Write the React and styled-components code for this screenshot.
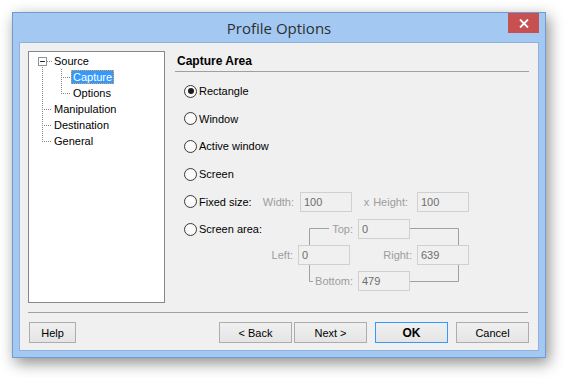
import React from 'react';
import styled, { createGlobalStyle } from 'styled-components';

const Global = createGlobalStyle`
  html, body { margin: 0; padding: 0; background: #ffffff; }
  body { font-family: "Liberation Sans", Arial, sans-serif; }
  * { box-sizing: border-box; }
`;

const Page = styled.div`
  width: 566px;
  height: 378px;
  padding: 12px 0 0 12px;
  overflow: hidden;
`;

const Window = styled.div`
  width: 534px;
  height: 346px;
  border: 1px solid #6f9bd0;
  background: #a3c9f3;
  padding: 0 6px 6px 6px;
  display: flex;
  flex-direction: column;
  box-shadow: 3px 5px 14px rgba(0, 0, 0, 0.45);
`;

const TitleBar = styled.div`
  height: 29px;
  display: grid;
  grid-template-columns: 1fr auto 1fr;
  align-items: center;
`;

const Title = styled.div`
  grid-column: 2;
  font-family: "Open Sans", "Noto Sans", sans-serif;
  font-size: 15px;
  color: #2e2e2e;
  padding-top: 1px;
`;

const CloseButton = styled.div`
  grid-column: 3;
  justify-self: end;
  align-self: start;
  width: 31px;
  height: 20px;
  background: #c75050;
  display: flex;
  align-items: center;
  justify-content: center;
`;

const Client = styled.div`
  flex: 1;
  background: #f0f0f0;
  border: 1px solid #8fb1db;
  padding: 8px 9px 7px 8px;
  display: flex;
  flex-direction: column;
`;

const Main = styled.div`
  height: 252px;
  display: flex;
  gap: 10px;
`;

const Tree = styled.div`
  width: 137px;
  height: 252px;
  border: 1px solid #828790;
  background: #ffffff;
  padding: 1px 0 0 4px;
  font-size: 11px;
  color: #000;
`;

const TreeRow = styled.div`
  height: 16px;
  display: flex;
  align-items: center;
`;

const TreeLabel = styled.span`
  height: 14px;
  line-height: 12px;
  padding: 0 1px;
  border: 1px dotted ${(p) => (p.$selected ? '#e8a040' : 'transparent')};
  background: ${(p) => (p.$selected ? '#3399ff' : 'transparent')};
  color: ${(p) => (p.$selected ? '#ffffff' : '#000000')};
  white-space: nowrap;
`;

const Panel = styled.div`
  flex: 1;
  display: flex;
  flex-direction: column;
`;

const PanelHeader = styled.div`
  height: 21px;
  line-height: 20px;
  padding-left: 2px;
  font-size: 12px;
  font-weight: bold;
  color: #000;
  border-bottom: 1px solid #a0a0a0;
`;

const Options = styled.div`
  padding: 9px 0 0 9px;
  display: flex;
  flex-direction: column;
  gap: 7.7px;
  font-size: 11px;
`;

const RadioRow = styled.label`
  height: 20px;
  display: flex;
  align-items: center;
  gap: 2px;
  color: #000;
  white-space: nowrap;
`;

const RadioCircle = styled.span`
  width: 13px;
  height: 13px;
  border-radius: 50%;
  border: 1px solid #3a3a3a;
  background: radial-gradient(circle at 50% 40%, #ffffff 0%, #f2f2f2 100%);
  display: flex;
  align-items: center;
  justify-content: center;
  flex: none;
  &::after {
    content: '';
    width: 6px;
    height: 6px;
    border-radius: 50%;
    background: ${(p) => (p.$checked ? '#1c1c1c' : 'transparent')};
  }
`;

const FixedRow = styled.div`
  display: grid;
  grid-template-columns: 116px 52px 65px 52px;
  height: 20px;
  align-items: center;
`;

const FieldGrid = styled.div`
  display: grid;
  grid-template-columns: 114px 52px 8px 52px 7px 52px;
  grid-template-rows: 20px 20px 20px;
  row-gap: 6px;
  align-items: center;
`;

const MutedLabel = styled.span`
  grid-column: ${(p) => p.$col || 'auto'};
  grid-row: ${(p) => p.$row || 'auto'};
  justify-self: end;
  padding-right: ${(p) => p.$pad ?? 5}px;
  color: #9d9d9d;
  white-space: nowrap;
  display: flex;
  gap: ${(p) => p.$gap || 0}px;
`;

const Field = styled.div`
  grid-column: ${(p) => p.$col || 'auto'};
  grid-row: ${(p) => p.$row || 'auto'};
  width: 52px;
  height: 20px;
  border: 1px solid #d0d0d0;
  background: #f0f0f0;
  color: #6d6d6d;
  padding-left: 3px;
  line-height: 18px;
  font-size: 11px;
`;

const GridCell = styled.div`
  grid-column: ${(p) => p.$col};
  grid-row: ${(p) => p.$row};
`;

const SplitCell = styled(GridCell)`
  display: flex;
  justify-content: space-between;
  align-items: center;
`;

const Bracket = styled.svg`
  grid-column: 2 / 7;
  grid-row: 1 / 4;
  width: 171px;
  height: 72px;
  align-self: start;
`;

const Separator = styled.div`
  height: 1px;
  margin: 9px 1px 0 0;
  background: #a0a0a0;
`;

const Footer = styled.div`
  margin-top: 9px;
  padding-left: 1px;
  display: flex;
  align-items: center;
`;

const Spacer = styled.div`
  flex: 1;
`;

const Button = styled.button`
  width: ${(p) => p.$w || 73}px;
  height: 21px;
  margin-left: ${(p) => p.$ml || 0}px;
  border: 1px solid ${(p) => (p.$default ? '#3399ff' : '#adadad')};
  background: linear-gradient(#f0f0f0, #e5e5e5);
  font-family: "Liberation Sans", Arial, sans-serif;
  font-size: ${(p) => (p.$default ? 12 : 11)}px;
  font-weight: ${(p) => (p.$default ? 'bold' : 'normal')};
  color: #000;
  padding: 0;
  border-radius: 0;
  cursor: default;
`;

const DOT = { stroke: '#8a8a8a', strokeWidth: 1, strokeDasharray: '1 1', fill: 'none' };

function Gutter({ kind }) {
  return (
    <svg width="19" height="16" viewBox="0 0 19 16" style={{ flex: 'none' }}>
      {kind === 'root' && (
        <>
          <rect x="5.5" y="4.5" width="8" height="8" fill="#ffffff" stroke="#919191" />
          <line x1="7" y1="8.5" x2="12" y2="8.5" stroke="#1a2f5a" strokeWidth="1" />
          <line x1="14" y1="8.5" x2="19" y2="8.5" {...DOT} />
          <line x1="9.5" y1="14" x2="9.5" y2="16" {...DOT} />
        </>
      )}
      {kind === 'line' && <line x1="9.5" y1="0" x2="9.5" y2="16" {...DOT} />}
      {kind === 'tee' && (
        <>
          <line x1="9.5" y1="0" x2="9.5" y2="16" {...DOT} />
          <line x1="11" y1="8.5" x2="19" y2="8.5" {...DOT} />
        </>
      )}
      {kind === 'ell' && (
        <>
          <line x1="9.5" y1="0" x2="9.5" y2="9" {...DOT} />
          <line x1="11" y1="8.5" x2="19" y2="8.5" {...DOT} />
        </>
      )}
    </svg>
  );
}

const treeItems = [
  { label: 'Source', gutters: ['root'] },
  { label: 'Capture', gutters: ['line', 'tee'], selected: true },
  { label: 'Options', gutters: ['line', 'ell'] },
  { label: 'Manipulation', gutters: ['tee'] },
  { label: 'Destination', gutters: ['tee'] },
  { label: 'General', gutters: ['ell'] },
];

function Radio({ checked, children }) {
  return (
    <RadioRow>
      <RadioCircle $checked={checked} />
      <span>{children}</span>
    </RadioRow>
  );
}

export default function App() {
  return (
    <>
      <Global />
      <Page>
        <Window>
          <TitleBar>
            <Title>Profile Options</Title>
            <CloseButton>
              <svg width="10" height="9" viewBox="0 0 10 9">
                <path d="M1 0.5 L9 8.5 M9 0.5 L1 8.5" stroke="#ffffff" strokeWidth="1.8" />
              </svg>
            </CloseButton>
          </TitleBar>
          <Client>
            <Main>
              <Tree>
                {treeItems.map((it) => (
                  <TreeRow key={it.label}>
                    {it.gutters.map((g, i) => (
                      <Gutter key={i} kind={g} />
                    ))}
                    <TreeLabel $selected={it.selected}>{it.label}</TreeLabel>
                  </TreeRow>
                ))}
              </Tree>
              <Panel>
                <PanelHeader>Capture Area</PanelHeader>
                <Options>
                  <Radio checked>Rectangle</Radio>
                  <Radio>Window</Radio>
                  <Radio>Active window</Radio>
                  <Radio>Screen</Radio>
                  <FixedRow>
                    <SplitCell $col="1" $row="1">
                      <Radio>Fixed size:</Radio>
                      <MutedLabel $pad={6}>Width:</MutedLabel>
                    </SplitCell>
                    <Field $col="2" $row="1">100</Field>
                    <MutedLabel $col="3" $row="1" $pad={9} $gap={4}>
                      <span>x</span>
                      <span>Height:</span>
                    </MutedLabel>
                    <Field $col="4" $row="1">100</Field>
                  </FixedRow>
                  <FieldGrid>
                    <Bracket viewBox="0 0 171 72">
                      <g stroke="#a0a0a0" strokeWidth="1" fill="none">
                        <path d="M31 9.5 H11.5 V26" />
                        <path d="M11.5 46 V62.5 H15" />
                        <path d="M112 9.5 H160.5 V26" />
                        <path d="M160.5 46 V62.5 H112" />
                      </g>
                    </Bracket>
                    <GridCell $col="1" $row="1">
                      <Radio>Screen area:</Radio>
                    </GridCell>
                    <MutedLabel $col="2 / 4" $row="1">Top:</MutedLabel>
                    <Field $col="4" $row="1">0</Field>
                    <MutedLabel $col="1" $row="2">Left:</MutedLabel>
                    <Field $col="2" $row="2">0</Field>
                    <MutedLabel $col="3 / 6" $row="2">Right:</MutedLabel>
                    <Field $col="6" $row="2">639</Field>
                    <MutedLabel $col="2 / 4" $row="3">Bottom:</MutedLabel>
                    <Field $col="4" $row="3">479</Field>
                  </FieldGrid>
                </Options>
              </Panel>
            </Main>
            <Separator />
            <Footer>
              <Button $w={47}>Help</Button>
              <Spacer />
              <Button>&lt; Back</Button>
              <Button $ml={2}>Next &gt;</Button>
              <Button $ml={8} $default>OK</Button>
              <Button $ml={8}>Cancel</Button>
            </Footer>
          </Client>
        </Window>
      </Page>
    </>
  );
}
